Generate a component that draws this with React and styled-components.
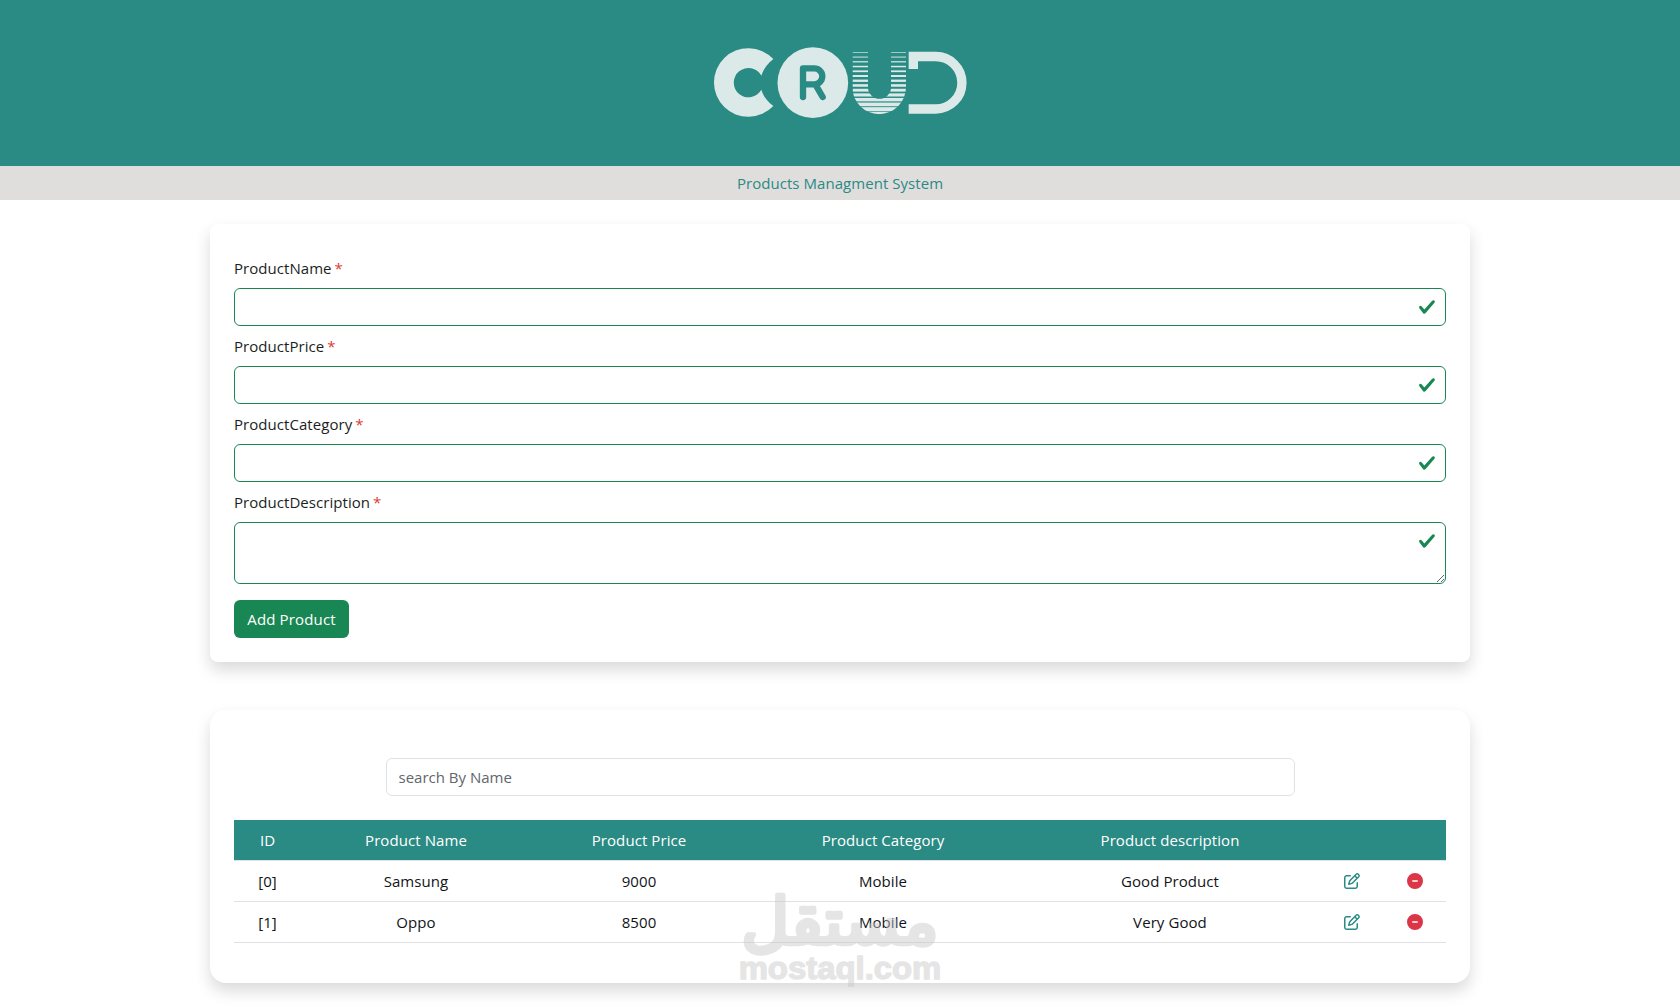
import React, { useState } from "react";
import styled, { createGlobalStyle } from "styled-components";
import { FaRegPenToSquare, FaCircleMinus } from "react-icons/fa6";

const teal = "#2a8a84";
const green = "#198754";

const GlobalStyle = createGlobalStyle`
  *, *::before, *::after {
    box-sizing: border-box;
  }
  body {
    margin: 0;
    background-color: #fff;
    color: #1b1f23;
    font-family: "Open Sans", "Noto Sans", sans-serif;
    font-size: 15px;
    line-height: 24px;
  }
  input, textarea, button {
    font: inherit;
  }
`;

const Page = styled.div`
  position: relative;
  min-height: 1007px;
  overflow: hidden;
  padding-bottom: 24px;
`;

const Header = styled.header`
  height: 166px;
  display: flex;
  justify-content: center;
  align-items: flex-start;
  padding-top: 35px;
  background-color: ${teal};
`;

const SubTitle = styled.div`
  height: 34px;
  padding-top: 5px;
  text-align: center;
  color: ${teal};
  background-color: #e0dedd;
  letter-spacing: 0.05px;
`;

const Container = styled.main`
  width: 1260px;
  margin: 24px auto 0;
  display: flex;
  flex-direction: column;
  gap: 48px;
`;

const Card = styled.section`
  padding: ${({ $pad }) => $pad};
  border-radius: ${({ $radius }) => $radius};
  background-color: #fff;
  box-shadow: 0 8px 16px rgba(0, 0, 0, 0.15);
`;

const Field = styled.div`
  display: flex;
  flex-direction: column;
  gap: 8px;
  margin-bottom: ${({ $last }) => ($last ? "16px" : "8px")};
`;

const Label = styled.label`
  letter-spacing: 0.05px;
  span {
    margin-left: -1px;
    color: #dd3a33;
  }
`;

const Control = styled.div`
  position: relative;
  display: flex;
  svg {
    position: absolute;
    top: 10px;
    right: 10px;
    width: 18px;
    height: 18px;
  }
`;

const Input = styled.input`
  width: ${({ $width }) => $width || "100%"};
  height: 38px;
  padding: 6px 12px;
  border: 1px solid ${({ $valid }) => ($valid ? green : "#dee2e6")};
  border-radius: 6px;
  background-color: #fff;
  outline: none;
  &::placeholder {
    color: #5f666c;
    opacity: 1;
  }
`;

const TextArea = styled(Input)`
  height: 62px;
  resize: vertical;
`;

const Button = styled.button`
  display: block;
  width: 115px;
  height: 38px;
  padding: 0;
  border: none;
  border-radius: 6px;
  color: white;
  background-color: ${green};
  letter-spacing: 0.15px;
  cursor: pointer;
`;

const SearchRow = styled.div`
  display: flex;
  justify-content: center;
  margin-bottom: 24px;
`;

const Table = styled.table`
  width: 100%;
  table-layout: fixed;
  border-collapse: separate;
  border-spacing: 0;
  text-align: center;
  letter-spacing: 0.08px;
  color: #111418;
  th,
  td {
    height: 41px;
    padding: 0;
    font-weight: 400;
    border-bottom: 1px solid #dee2e6;
  }
  th {
    color: white;
    background-color: ${teal};
    background-clip: padding-box;
  }
`;

const IconButton = styled.button`
  display: inline-flex;
  padding: 0 0 4px ${({ $shift }) => $shift || "0"};
  border: none;
  background: none;
  font-size: 16px;
  vertical-align: middle;
  color: ${({ $color }) => $color};
  cursor: pointer;
`;

const Watermark = styled.svg`
  position: absolute;
  left: 720px;
  top: 870px;
  width: 240px;
  height: 125px;
  pointer-events: none;
`;

const stripes = Array.from({ length: 14 }, (_, i) => ({
  y: 52 + i * 14.2,
  h: 2 + i * 0.82,
}));

const Logo = () => (
  <svg width="280" height="95" viewBox="0 0 840 285" fill="#dbeae8">
    <path d="M220 72A103 103 0 1 0 220 213Q192 192 184 164A44 44 0 1 1 184 122Q194 92 220 72Z" />
    <circle cx="338.500" cy="143" r="106" />
    <g
      fill="none"
      stroke={teal}
      strokeWidth="19"
      strokeLinecap="round"
      strokeLinejoin="round"
    >
      <path d="M309 186V100H343A24 24 0 0 1 343 148H309M346 148L368 186" />
    </g>
    <clipPath id="cup">
      <path d="M457 45H504V157A34.500 34.500 0 0 0 573 157V45H618V157A80.500 80.500 0 0 1 457 157Z" />
    </clipPath>
    <g clipPath="url(#cup)">
      {stripes.map((s) => (
        <rect key={s.y} x="457" y={s.y - s.h / 2} width="161" height={s.h} />
      ))}
    </g>
    <path
      d="M640 102V64.500H707A78.750 78.750 0 0 1 707 222H626"
      fill="none"
      stroke="#dbeae8"
      strokeWidth="28"
    />
  </svg>
);

const Check = () => (
  <svg viewBox="0 0 8 8">
    <path
      fill={green}
      d="M2.3 6.73.6 4.53c-.4-1.040.46-1.400 1.100-.8l1.100 1.400 3.400-3.800c.6-.63 1.600-.27 1.200.7l-4 4.600c-.43.5-.8.4-1.100.1z"
    />
  </svg>
);

const fields = [
  { name: "ProductName" },
  { name: "ProductPrice" },
  { name: "ProductCategory" },
  { name: "ProductDescription", multiline: true },
];

const columns = [
  { title: "ID", width: 67 },
  { title: "Product Name", width: 230 },
  { title: "Product Price", width: 216 },
  { title: "Product Category", width: 272 },
  { title: "Product description", width: 302 },
  { title: "", width: 61 },
  { title: "", width: 64 },
];

const products = [
  { name: "Samsung", price: 9000, category: "Mobile", description: "Good Product" },
  { name: "Oppo", price: 8500, category: "Mobile", description: "Very Good" },
];

const App = () => {
  const [search, setSearch] = useState("");
  const rows = products
    .map((product, id) => ({ ...product, id }))
    .filter((p) => p.name.toLowerCase().includes(search.toLowerCase()));

  return (
    <>
      <GlobalStyle />
      <Page>
        <Header>
          <Logo />
        </Header>
        <SubTitle>Products Managment System</SubTitle>

        <Container>
          <Card $pad="32px 24px 24px" $radius="8px">
            {fields.map(({ name, multiline }) => (
              <Field key={name} $last={multiline}>
                <Label htmlFor={name}>
                  {name} <span>*</span>
                </Label>
                <Control>
                  {multiline ? (
                    <TextArea as="textarea" id={name} $valid />
                  ) : (
                    <Input id={name} type="text" $valid />
                  )}
                  <Check />
                </Control>
              </Field>
            ))}
            <Button type="button">Add Product</Button>
          </Card>

          <Card $pad="48px 24px 40px" $radius="16px">
            <SearchRow>
              <Input
                $width="909px"
                placeholder="search By Name"
                value={search}
                onChange={(e) => setSearch(e.target.value)}
              />
            </SearchRow>
            <Table>
              <colgroup>
                {columns.map((c, i) => (
                  <col key={i} width={c.width} />
                ))}
              </colgroup>
              <thead>
                <tr>
                  {columns.map((c, i) => (
                    <th key={i}>{c.title}</th>
                  ))}
                </tr>
              </thead>
              <tbody>
                {rows.map((p) => (
                  <tr key={p.id}>
                    <td>[{p.id}]</td>
                    <td>{p.name}</td>
                    <td>{p.price}</td>
                    <td>{p.category}</td>
                    <td>{p.description}</td>
                    <td>
                      <IconButton $color={teal} aria-label="edit">
                        <FaRegPenToSquare />
                      </IconButton>
                    </td>
                    <td>
                      <IconButton $color="#dc3545" $shift="1px" aria-label="delete">
                        <FaCircleMinus />
                      </IconButton>
                    </td>
                  </tr>
                ))}
              </tbody>
            </Table>
          </Card>
        </Container>

        <Watermark
          viewBox="0 0 720 375"
          fill="#c9c9c9"
          stroke="#c9c9c9"
          strokeLinejoin="round"
          opacity="0.48"
        >
          <text
            x="360"
            y="222"
            textAnchor="middle"
            direction="rtl"
            fontFamily="'DejaVu Sans', sans-serif"
            fontSize="192"
            strokeWidth="13"
            textLength="592"
            lengthAdjust="spacingAndGlyphs"
          >
            مستقل
          </text>
          <text
            x="56"
            y="328"
            fontFamily="'Liberation Sans', sans-serif"
            fontWeight="700"
            fontSize="94"
            strokeWidth="4"
            textLength="608"
            lengthAdjust="spacingAndGlyphs"
          >
            mostaql.com
          </text>
        </Watermark>
      </Page>
    </>
  );
};

export default App;
